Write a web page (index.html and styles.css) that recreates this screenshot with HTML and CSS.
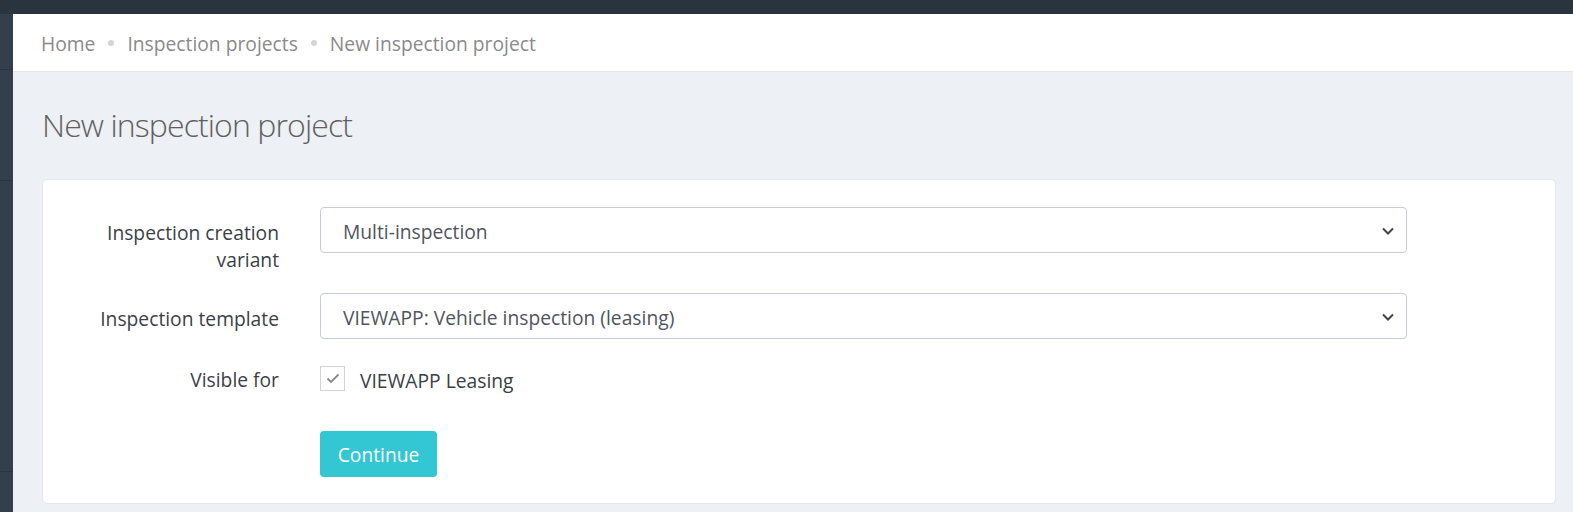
FILE: index.html
```html
<!DOCTYPE html>
<html>
<head>
<meta charset="utf-8">
<link rel="stylesheet" href="styles.css">
</head>
<body>
<div class="topbar"></div>
<div class="layout">
  <aside class="sidebar">
    <div class="sb-item sb-1"></div>
    <div class="sb-item sb-2"></div>
    <div class="sb-item sb-3"></div>
  </aside>
  <main class="main">
    <nav class="breadcrumb">
      <a class="crumb">Home</a>
      <span class="dot"></span>
      <a class="crumb">Inspection projects</a>
      <span class="dot"></span>
      <span class="crumb">New inspection project</span>
    </nav>
    <div class="content">
      <h1 class="title">New inspection project</h1>
      <section class="card">
        <div class="row row-select">
          <label class="label">Inspection creation variant</label>
          <div class="field">
            <div class="select">
              <span>Multi-inspection</span>
              <svg class="chev" width="12" height="8" viewBox="0 0 12 8"><path d="M1 1.5 L6 6.5 L11 1.5" fill="none" stroke="#444" stroke-width="2"/></svg>
            </div>
          </div>
        </div>
        <div class="row row-select row-2">
          <label class="label">Inspection template</label>
          <div class="field">
            <div class="select">
              <span>VIEWAPP: Vehicle inspection (leasing)</span>
              <svg class="chev" width="12" height="8" viewBox="0 0 12 8"><path d="M1 1.5 L6 6.5 L11 1.5" fill="none" stroke="#444" stroke-width="2"/></svg>
            </div>
          </div>
        </div>
        <div class="row row-check">
          <label class="label">Visible for</label>
          <div class="field check-field">
            <span class="checkbox">
              <svg width="14" height="11" viewBox="0 0 14 11"><path d="M1.5 5.5 L5 9 L12.5 1.5" fill="none" stroke="#888" stroke-width="1.8"/></svg>
            </span>
            <span class="check-label">VIEWAPP Leasing</span>
          </div>
        </div>
        <div class="row row-btn">
          <div class="label"></div>
          <div class="field">
            <button class="btn">Continue</button>
          </div>
        </div>
      </section>
    </div>
  </main>
</div>
</body>
</html>
```
FILE: styles.css
```css
* { box-sizing: border-box; }
html, body { margin: 0; padding: 0; }
body {
  font-family: "Open Sans", "Liberation Sans", sans-serif;
  background: #edf0f4;
  width: 1573px;
  height: 512px;
  overflow: hidden;
}
.topbar {
  height: 14px;
  background: #29343f;
}
.layout {
  display: flex;
  height: 498px;
}
.sidebar {
  width: 13px;
  flex: none;
  background: #343f4c;
  display: flex;
  flex-direction: column;
}
.sb-item { border-bottom: 1px solid #2b3541; flex: none; }
.sb-1 { height: 56px; }
.sb-2 { height: 111px; }
.sb-3 { height: 291px; }
.main {
  flex: 1;
  display: flex;
  flex-direction: column;
  min-height: 0;
}
.breadcrumb {
  flex: none;
  height: 58px;
  background: #fff;
  border-bottom: 1px solid #e3e6ea;
  display: flex;
  align-items: center;
  padding-left: 28px;
  padding-top: 1px;
  font-size: 19.25px;
  color: #8a8a8a;
}
.crumb { color: #8a8a8a; text-decoration: none; }
.dot {
  width: 6px;
  height: 6px;
  border-radius: 50%;
  background: #d4d4d4;
  margin: 0 13px;
}
.content {
  flex: none;
  padding: 0 17px 0 29px;
}
.title {
  margin: 0;
  padding: 29px 0 31px;
  font-weight: 300;
  font-size: 32px;
  line-height: 47px;
  color: #606060;
  letter-spacing: -0.9px;
}
.card {
  background: #fff;
  border: 1px solid #e5e8ec;
  border-radius: 5px;
  padding: 27px 0 26px;
  display: flex;
  flex-direction: column;
}
.row {
  display: flex;
  align-items: flex-start;
}
.row-select { height: 46px; }
.row-2 { margin-top: 40px; }
.label {
  width: 236px;
  padding-left: 30px;
  text-align: right;
  font-size: 19.25px;
  line-height: 27px;
  color: #3a3f48;
  padding-top: 12px;
  flex: none;
}
.field {
  margin-left: 41px;
  width: 1087px;
}
.select {
  height: 46px;
  border: 1px solid #c5ccd6;
  border-radius: 4px;
  display: flex;
  align-items: center;
  justify-content: space-between;
  padding: 2px 12px 0 22px;
  font-size: 19.25px;
  color: #4f5560;
}
.chev { margin-top: -1px; }
.row-check { margin-top: 27px; height: 25px; }
.row-check .label { padding-top: 0; }
.check-field {
  display: flex;
  align-items: center;
  gap: 15px;
  height: 25px;
}
.checkbox {
  width: 25px;
  height: 25px;
  flex: none;
  border: 1px solid #d3d3d3;
  display: flex;
  align-items: center;
  justify-content: center;
}
.check-label {
  font-size: 19.25px;
  color: #3a3f48;
  line-height: 27px;
  padding-top: 3px;
}
.row-btn { margin-top: 40px; }
.btn {
  width: 117px;
  height: 46px;
  border: none;
  border-radius: 4px;
  background: #33c6d3;
  color: #fff;
  font-family: "Open Sans", "Liberation Sans", sans-serif;
  font-size: 19.25px;
  padding: 0;
}
```
